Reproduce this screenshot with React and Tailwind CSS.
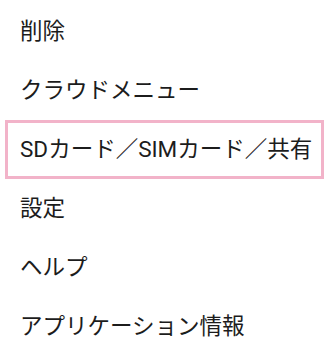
const items = [
  "削除",
  "クラウドメニュー",
  "SDカード／SIMカード／共有",
  "設定",
  "ヘルプ",
  "アプリケーション情報",
];

export default function App() {
  return (
    <div
      className="w-[330px] h-[358px] bg-white overflow-hidden pt-[2px]"
      style={{ fontFamily: 'Roboto, "Noto Sans CJK JP", sans-serif' }}
    >
      <ul>
        {items.map((label, i) =>
          i === 2 ? (
            <li
              key={i}
              className="h-[59px] mx-[5px] w-[319px] border-[3px] border-[#f2b3c9] pl-[12px] flex items-center text-[22.5px] text-[#1c1c1c] whitespace-nowrap"
            >
              {label}
            </li>
          ) : (
            <li
              key={i}
              className="h-[59px] pl-5 flex items-center text-[22.5px] text-[#1c1c1c] whitespace-nowrap"
            >
              {label}
            </li>
          )
        )}
      </ul>
    </div>
  );
}
